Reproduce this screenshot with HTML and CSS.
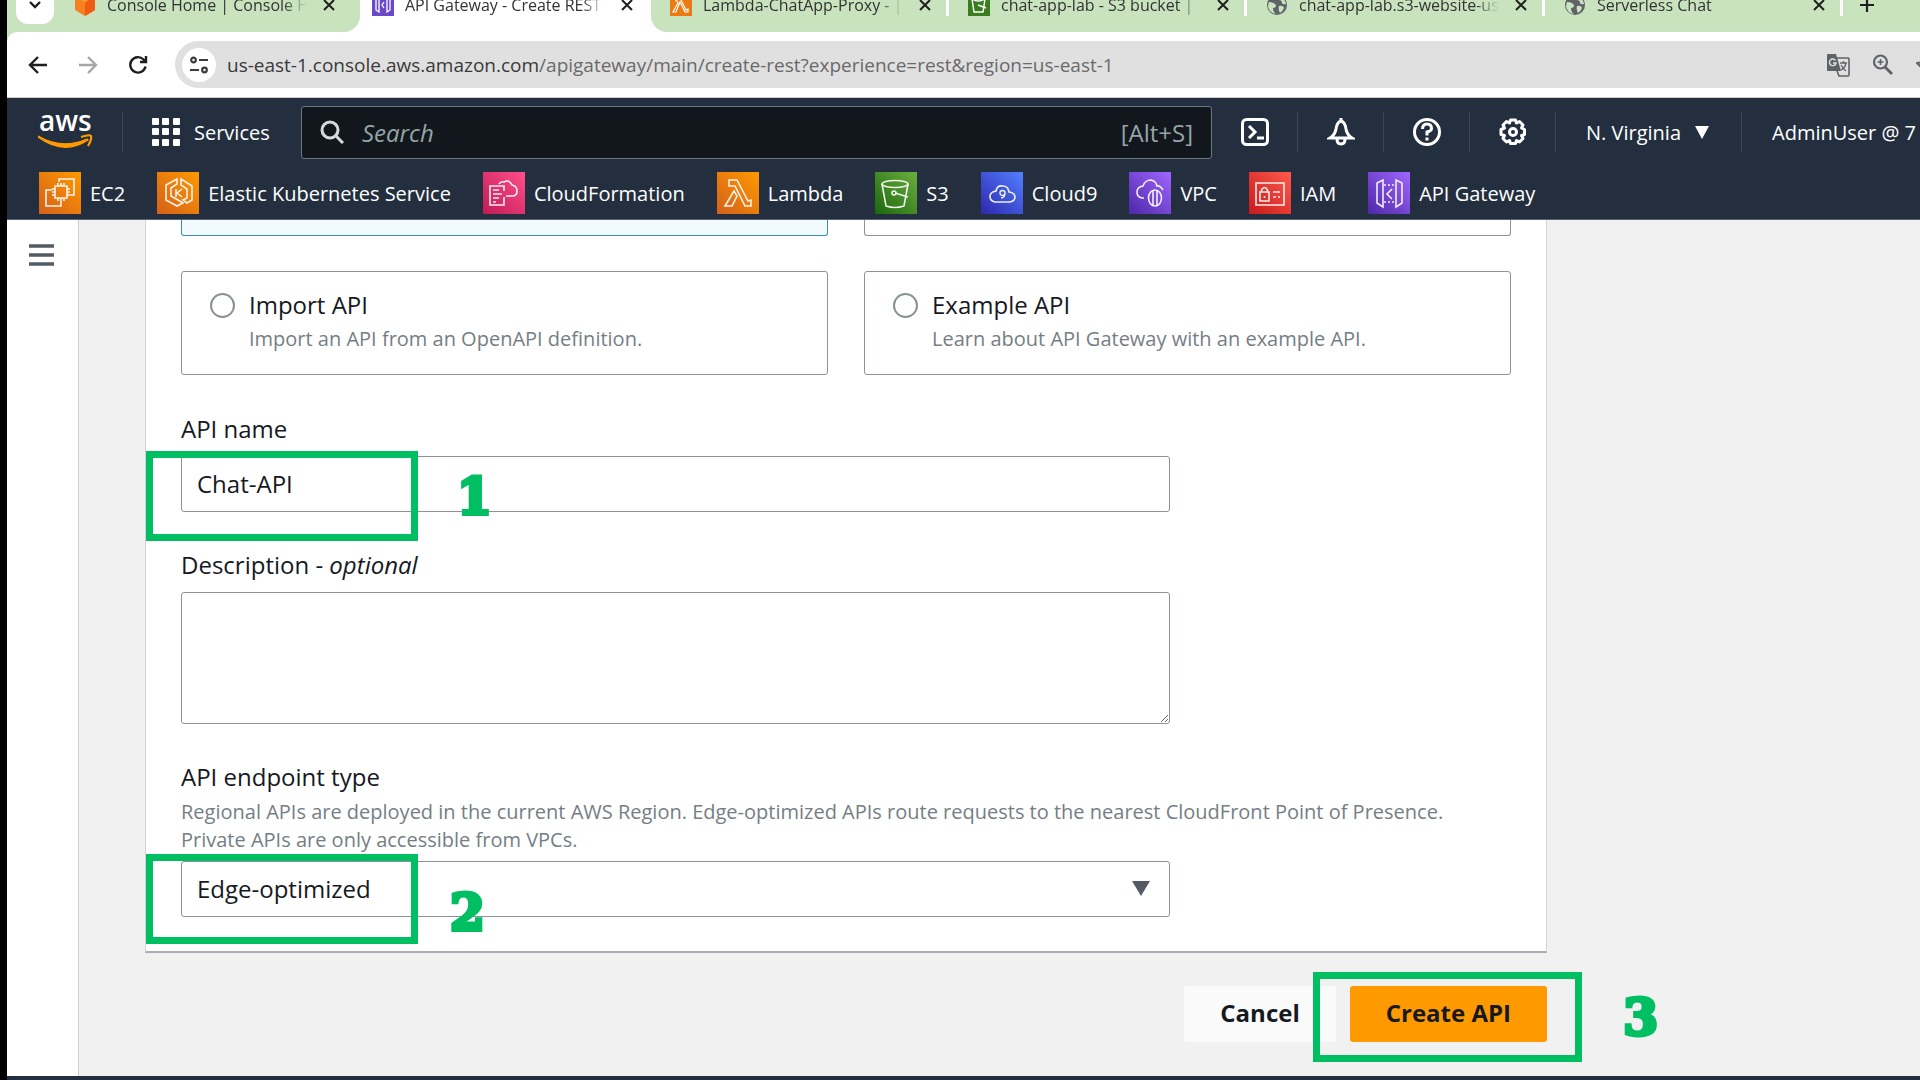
FILE: index.html
```html
<!DOCTYPE html>
<html lang="en">
<head>
<meta charset="utf-8">
<title>API Gateway - Create REST API</title>
<link rel="stylesheet" href="styles.css">
</head>
<body>
<div class="browser">
  <div class="tabstrip">
    <div class="tab-group tab-group-first">
      <button class="tab-search" aria-label="Search tabs"><svg width="16" height="16" viewBox="0 0 16 16"><path d="M3 5l5 5 5-5" fill="none" stroke="#1f1f1f" stroke-width="2.4"/></svg></button>
      <div class="tab">
        <svg class="favicon" viewBox="0 0 22 22"><path d="M1 3 11-2 21 3v13l-10 6-10-6z" fill="#f58220"/><path d="M11 8 21 3v13l-10 6z" fill="#f15a12"/><path d="M1 3l10 5 10-5-10-5z" fill="#ff9a2e"/></svg>
        <span class="tab-title">Console Home | Console H</span>
        <button class="tab-close" aria-label="Close tab"><svg viewBox="0 0 14 14"><path d="M2 2l10 10M12 2 2 12"/></svg></button>
      </div>
    </div>
    <div class="tab tab-active">
      <svg class="favicon" viewBox="0 0 22 22"><path d="M0 0h22v22H0z" fill="#6b48c8"/><path d="M7 4 4 6v10l3 2zM15 4l3 2v10l-3 2zM12 8l-2 3 2 3" fill="none" stroke="#fff" stroke-width="1.3"/></svg>
      <span class="tab-title">API Gateway - Create REST</span>
      <button class="tab-close" aria-label="Close tab"><svg viewBox="0 0 14 14"><path d="M2 2l10 10M12 2 2 12"/></svg></button>
    </div>
    <div class="tab-group tab-group-last">
      <div class="tab">
        <svg class="favicon" viewBox="0 0 22 22"><path d="M0 0h22v22H0z" fill="#ed7a10"/><path d="M6 4h4l6 12 2-1v3h-3L10 8l-4 10H3l5-9-1-2H6z" fill="none" stroke="#fff" stroke-width="1.2"/></svg>
        <span class="tab-title">Lambda-ChatApp-Proxy - |</span>
        <button class="tab-close" aria-label="Close tab"><svg viewBox="0 0 14 14"><path d="M2 2l10 10M12 2 2 12"/></svg></button>
      </div>
      <div class="tab">
        <svg class="favicon" viewBox="0 0 22 22"><path d="M0 0h22v22H0z" fill="#3a7d1e"/><path d="M4 5h13l-2 13H6zM4 5q6 4 13 0M10 11l8 3" fill="none" stroke="#fff" stroke-width="1.4"/></svg>
        <span class="tab-title">chat-app-lab - S3 bucket |</span>
        <button class="tab-close" aria-label="Close tab"><svg viewBox="0 0 14 14"><path d="M2 2l10 10M12 2 2 12"/></svg></button>
      </div>
      <div class="tab">
        <svg class="favicon" viewBox="0 0 22 22"><circle cx="11" cy="11" r="10" fill="#5f6368"/><path d="M3 8q5 0 7 3 0 3-3 3 0 4 3 6-7-1-8-8zM12 2q-2 3 1 4 3 0 3 3 1 2 4 1-1-6-8-8zM13 12q4-1 5 2-1 3-4 5-2-3-1-7z" fill="#c9e3be"/></svg>
        <span class="tab-title">chat-app-lab.s3-website-us</span>
        <button class="tab-close" aria-label="Close tab"><svg viewBox="0 0 14 14"><path d="M2 2l10 10M12 2 2 12"/></svg></button>
      </div>
      <div class="tab">
        <svg class="favicon" viewBox="0 0 22 22"><circle cx="11" cy="11" r="10" fill="#5f6368"/><path d="M3 8q5 0 7 3 0 3-3 3 0 4 3 6-7-1-8-8zM12 2q-2 3 1 4 3 0 3 3 1 2 4 1-1-6-8-8zM13 12q4-1 5 2-1 3-4 5-2-3-1-7z" fill="#c9e3be"/></svg>
        <span class="tab-title">Serverless Chat</span>
        <button class="tab-close" aria-label="Close tab"><svg viewBox="0 0 14 14"><path d="M2 2l10 10M12 2 2 12"/></svg></button>
      </div>
      <button class="tab-new" aria-label="New tab"><svg width="18" height="18" viewBox="0 0 18 18"><path d="M9 2v14M2 9h14" stroke="#1f1f1f" stroke-width="2.2"/></svg></button>
    </div>
  </div>

  <div class="toolbar-wrap">
    <div class="toolbar">
      <button class="nav-button" aria-label="Back"><svg viewBox="0 0 20 20"><path d="M19 10H3M10 2l-8 8 8 8" stroke="#1f1f1f"/></svg></button>
      <button class="nav-button" aria-label="Forward"><svg viewBox="0 0 20 20"><path d="M1 10h16M10 2l8 8-8 8" stroke="#a6a6a6"/></svg></button>
      <button class="nav-button" aria-label="Reload"><svg viewBox="0 0 20 20"><path d="M17.500 11.500A7.700 7.700 0 1 1 15.500 4.500L18 7M18 1v6h-6" stroke="#1f1f1f"/></svg></button>
      <div class="omnibox">
        <button class="site-info" aria-label="View site information"><svg width="20" height="20" viewBox="0 0 20 20" fill="none" stroke="#3c3c3c" stroke-width="2.200"><circle cx="4.500" cy="5" r="2.300"/><path d="M10 5h9M1 15h9"/><circle cx="15.500" cy="15" r="2.300"/></svg></button>
        <div class="url"><span class="url-host">us-east-1.console.aws.amazon.com</span>/apigateway/main/create-rest?experience=rest&amp;region=us-east-1</div>
        <button class="omni-action" aria-label="Translate this page"><svg width="24" height="24" viewBox="0 0 24 24"><path d="M2 1h8l5 17H2q-1 0-1-1V2q0-1 1-1z" fill="#5f6368"/><path d="M11 5h11q1 0 1 1v16q0 1-1 1h-9l-2-5" fill="none" stroke="#5f6368" stroke-width="1.600"/><path d="M14 10h7M17.500 8v2M20 10q-1 5-5 7M15 12q2 4 5 6" fill="none" stroke="#5f6368" stroke-width="1.300"/><path d="M9.500 7.500A3.300 3.300 0 1 0 10 10H7" fill="none" stroke="#e0e0e0" stroke-width="1.400"/></svg></button>
        <button class="omni-action" aria-label="Zoom"><svg width="22" height="22" viewBox="0 0 22 22" fill="none" stroke="#5f6368" stroke-width="2.200"><circle cx="8.500" cy="8" r="6.500"/><path d="M13 13l7 7" stroke-width="2.800"/><path d="M5.500 8h6M8.500 5v6" stroke-width="1.600"/></svg></button>
        <button class="omni-action omni-star" aria-label="Bookmark this tab"><svg width="22" height="22" viewBox="0 0 22 22"><path d="M11 1l3 7 7 1-5 5 1 7-6-4-6 4 1-7-5-5 7-1z" fill="none" stroke="#5f6368" stroke-width="2"/></svg></button>
      </div>
    </div>
  </div>

  <header class="aws-header">
    <div class="aws-nav">
      <a class="aws-logo" href="#" aria-label="AWS"><svg width="56" height="40" viewBox="0 0 56 40"><text x="1" y="19" class="aws-word">aws</text><path d="M0 24q24 14 49 3l1 1q-24 16-50-3z" fill="#f90" stroke="#f90" stroke-width="1.200"/><path d="M43 25q9-3 10-1 1 3-3 10" fill="none" stroke="#f90" stroke-width="2.200"/></svg></a>
      <button class="services"><svg width="28" height="28" viewBox="0 0 28 28" fill="#fff"><rect width="7" height="7" rx="1"/><rect x="10" width="7" height="7" rx="1"/><rect x="21" width="7" height="7" rx="1"/><rect y="10" width="7" height="7" rx="1"/><rect x="10" y="10" width="7" height="7" rx="1"/><rect x="21" y="10" width="7" height="7" rx="1"/><rect y="21" width="7" height="7" rx="1"/><rect x="10" y="21" width="7" height="7" rx="1"/><rect x="21" y="21" width="7" height="7" rx="1"/></svg><span>Services</span></button>
      <label class="search">
        <svg width="24" height="24" viewBox="0 0 24 24" fill="none" stroke="#d5dbdb" stroke-width="3"><circle cx="10" cy="10" r="8"/><path d="M15.500 15.500l7.500 7.500"/></svg>
        <input class="search-input" type="search" placeholder="Search" aria-label="Search">
        <span class="search-key">[Alt+S]</span>
      </label>
      <button class="nav-icon" aria-label="CloudShell"><svg viewBox="0 0 28 28"><rect x="1.500" y="1.500" width="25" height="25" rx="4"/><path d="M8 8l6 6-6 6M16 20h7"/></svg></button>
      <button class="nav-icon" aria-label="Notifications"><svg viewBox="0 0 28 28"><path d="M14 3q-4 1-5 8-1 6-6 9h22q-5-3-6-9-1-7-5-8zM14 0v4M10 21q0 5 4 5t4-5"/></svg></button>
      <button class="nav-icon" aria-label="Help"><svg viewBox="0 0 28 28"><circle cx="14" cy="14" r="12.500"/><path d="M9.500 11q0-5 4.500-5t4.500 4.500Q18.500 13 14 14v3.500M14 19.500v3"/></svg></button>
      <button class="nav-icon" aria-label="Settings"><svg viewBox="0 0 28 28"><path d="M11.500 2h5l1 3 3-1.500 3.500 3.500-1.500 3 3 1.500v5l-3 1 1.500 3-3.500 3.500-3-1.500-1 3h-5l-1-3-3 1.500L4 20.500l1.500-3-3.500-1v-5l3.500-1.500L4 7l3.500-3.500 3 1.500z" stroke-linejoin="round"/><circle cx="14" cy="14" r="3.500"/></svg></button>
      <button class="nav-menu region">N. Virginia <svg width="14" height="13" viewBox="0 0 14 13"><path d="M0 0h14L7 13z" fill="#fff"/></svg></button>
      <button class="nav-menu account">AdminUser @ 7</button>
    </div>
    <nav class="favorites">
      <a class="fav" href="#"><svg class="fav-icon orange" viewBox="0 0 42 42"><path d="M16 14h12v12H16zM19 14v-3M22 14v-3M25 14v-3M19 26v3M22 26v3M25 26v3M16 17h-3M16 20h-3M16 23h-3M28 17h3M28 20h3M28 23h3M20 10V7h15v16h-4M13 18H7v16h15v-5"/></svg>EC2</a>
      <a class="fav" href="#"><svg class="fav-icon orange" viewBox="0 0 42 42"><path d="M20 7 9 13v15l11 6 6-3-5-3-7-4V16l6-4zM24 7l11 7v14l-5 3-4-3 4-2v-9l-6-4zM19 17v8M25 17l-5 4 5 4"/></svg>Elastic Kubernetes Service</a>
      <a class="fav" href="#"><svg class="fav-icon pink" viewBox="0 0 42 42"><path d="M21 25v8H7V14h14v5M10 18h6M10 22h9M10 26h6M10 30h3M16 12q2-3 5-2 5-3 8 3 5 1 5 6t-5 5h-6"/></svg>CloudFormation</a>
      <a class="fav" href="#"><svg class="fav-icon orange" viewBox="0 0 42 42"><path d="M12 8h8l11 21 3-1v6h-6L18 14h-6zM17 19 8 34h7l5-10z"/></svg>Lambda</a>
      <a class="fav" href="#"><svg class="fav-icon green" viewBox="0 0 42 42"><ellipse cx="20" cy="12" rx="13" ry="3.500"/><path d="M7 12l4 22q9 3 18 0l4-22M20 21l13 4"/><circle cx="19" cy="21" r="2"/></svg>S3</a>
      <a class="fav" href="#"><svg class="fav-icon blue" viewBox="0 0 42 42"><path d="M14 30q-5-1-5-5.500t6-5.500q1-6 7-5 5 0 6 6 6 1 6 5t-5 5z"/><path d="M24 21a2.500 2.500 0 1 0-2.500 2.500q2.500 0 2.500-2.500 0 5-4 5" stroke-width="1.400"/></svg>Cloud9</a>
      <a class="fav" href="#"><svg class="fav-icon purple" viewBox="0 0 42 42"><path d="M15 26h-2q-5-1-5-6t6-6q2-6 8-6 5 1 6 6 3-1 6 4"/><ellipse cx="26" cy="26" rx="6.500" ry="8"/><path d="M24 18v16M28 18v16"/></svg>VPC</a>
      <a class="fav" href="#"><svg class="fav-icon red" viewBox="0 0 42 42"><path d="M7 11h28v22H7zM11 20h9v9h-9zM12.500 20v-2q3-5 6 0v2M15.500 24v2M24 20h7M24 25h3M29 25h2"/></svg>IAM</a>
      <a class="fav" href="#"><svg class="fav-icon purple" viewBox="0 0 42 42"><path d="M9 11l6-3v27l-6-4zM34 11l-6-3v27l6-4zM24 17l-5 5 5 5"/><path d="M16 13h11M16 30h11" stroke-dasharray="2 2"/></svg>API Gateway</a>
    </nav>
  </header>

  <div class="page">
    <aside class="side"><button class="side-toggle" aria-label="Open navigation"><svg width="25" height="23" viewBox="0 0 25 23"><path d="M0 2h25M0 11h25M0 20h25" stroke="#545b64" stroke-width="3.500"/></svg></button></aside>
    <main class="main">
      <form class="form">
        <div class="card">
          <div class="tiles">
            <div class="tile tile-cut tile-selected"></div>
            <div class="tile tile-cut"></div>
            <label class="tile"><input class="radio" type="radio" name="kind"><span class="label">Import API</span><span class="hint">Import an API from an OpenAPI definition.</span></label>
            <label class="tile"><input class="radio" type="radio" name="kind"><span class="label">Example API</span><span class="hint">Learn about API Gateway with an example API.</span></label>
          </div>
          <div class="field">
            <label class="label" for="api-name">API name</label>
            <div class="control"><input class="input" id="api-name" type="text" value="Chat-API"><div class="mark mark-name"></div><span class="step step-name">1</span></div>
          </div>
          <div class="field">
            <label class="label" for="description">Description - <i>optional</i></label>
            <div class="control"><textarea class="input textarea" id="description"></textarea></div>
          </div>
          <div class="field field-endpoint">
            <label class="label" for="endpoint">API endpoint type</label>
            <p class="hint">Regional APIs are deployed in the current AWS Region. Edge-optimized APIs route requests to the nearest CloudFront Point of Presence. Private APIs are only accessible from VPCs.</p>
            <div class="control"><select class="input select" id="endpoint"><option>Edge-optimized</option></select><svg class="caret" width="18" height="15" viewBox="0 0 18 15"><path d="M0 0h18L9 15z" fill="#545b64"/></svg><div class="mark mark-endpoint"></div><span class="step step-endpoint">2</span></div>
          </div>
        </div>
        <div class="actions">
          <button class="button" type="button">Cancel</button>
          <button class="button button-primary" type="button">Create API</button>
          <div class="mark mark-create"></div><span class="step step-create">3</span>
        </div>
      </form>
    </main>
  </div>
  <footer class="footer"></footer>
</div>
</body>
</html>
```
FILE: styles.css
```css
* { box-sizing: border-box; }

body {
  margin: 0;
  background: #000;
  color: #16191f;
  font-family: "Open Sans", "Noto Sans", sans-serif;
  font-size: 20px;
  overflow: hidden;
}

button {
  padding: 0;
  border: 0;
  background: none;
  color: inherit;
  font: inherit;
}

svg { display: block; flex: none; }

.browser {
  display: flex;
  flex-direction: column;
  min-height: 100vh;
  margin-left: 7px;
  overflow: hidden;
}

/* Browser tabs, the top half scrolled out of view */
.tabstrip {
  display: flex;
  height: 54px;
  margin-top: -22px;
  background: #fff;
}

.tab-group { display: flex; align-items: center; background: #c9e3be; }
.tab-group-first { border-bottom-right-radius: 16px; padding-left: 9px; gap: 8px; }
.tab-group-last { flex: 1; border-bottom-left-radius: 16px; min-width: 0; }

.tab-search {
  display: grid;
  place-items: center;
  width: 38px;
  height: 38px;
  border-radius: 12px;
  background: #fff;
}

.tab {
  display: flex;
  align-items: center;
  flex: none;
  width: 298px;
  height: 54px;
  padding-left: 12px;
  font-size: 16px;
}

.tab-active { width: 291px; background: #fff; }
.tab-group-last .tab { padding-left: 19px; }
.tab-group-last .tab::after {
  content: "";
  width: 3px;
  height: 22px;
  margin-left: auto;
  background: #fff;
}

.favicon { width: 22px; height: 22px; margin-right: 11px; }

.tab-title {
  width: 200px;
  overflow: hidden;
  white-space: nowrap;
  color: #333;
  mask-image: linear-gradient(90deg, #000 88%, transparent);
}

.tab-close { margin-left: 15px; }
.tab-close svg { width: 14px; height: 14px; stroke: #1f1f1f; stroke-width: 2; }
.tab-new { margin-left: 15px; }

.toolbar-wrap { background: #c9e3be; }

.toolbar {
  display: flex;
  align-items: center;
  height: 66px;
  padding-left: 21px;
  border-top-left-radius: 10px;
  background: #fff;
  border-bottom: 1px solid #ccc;
}

.nav-button { width: 20px; height: 20px; margin-right: 30px; }
.nav-button svg { width: 20px; height: 20px; fill: none; stroke-width: 2.4px; }

.omnibox {
  display: flex;
  align-items: center;
  flex: 1;
  height: 47px;
  margin-left: -3px;
  padding-left: 7px;
  border-radius: 24px 0 0 24px;
  background: #e0e0e0;
  overflow: hidden;
}

.site-info {
  display: grid;
  place-items: center;
  width: 34px;
  height: 34px;
  margin-right: 11px;
  border-radius: 50%;
  background: #fff;
}

.url { flex: 1; color: #6a6a6a; font-size: 19px; white-space: nowrap; }
.url-host { color: #3a3a3a; }
.omni-action { margin-right: 22px; }
.omni-star { margin-right: -18px; }

.aws-header { background: #232f3e; color: #fff; border-bottom: 1px solid #5a6470; }

.aws-nav {
  display: flex;
  align-items: center;
  height: 70px;
  padding: 0 0 2px 31px;
}

.aws-logo { padding-right: 28px; border-right: 1px solid #3a4655; }
.aws-word { fill: #fff; font-size: 28px; font-weight: 600; }

.services {
  display: flex;
  align-items: center;
  flex: none;
  gap: 14px;
  width: 178px;
  padding-left: 29px;
}

.search {
  display: flex;
  align-items: center;
  flex: 0 1 911px;
  height: 53px;
  padding: 0 18px;
  border: 1px solid #6b7680;
  border-radius: 3px;
  background: #12171e;
  color: #95a5a6;
  font-size: 24px;
}

.search-input {
  flex: 1;
  min-width: 0;
  margin-left: 18px;
  padding: 0;
  border: 0;
  outline: 0;
  background: none;
  color: #fff;
  font: inherit;
}

.search-input::placeholder { color: #95a5a6; font-style: italic; }

.nav-icon {
  display: grid;
  flex: none;
  place-items: center;
  width: 86px;
  height: 40px;
  border-right: 1px solid #3a4655;
}

.nav-icon svg { width: 28px; height: 28px; fill: none; stroke: #fff; stroke-width: 3px; }

.nav-menu {
  display: flex;
  align-items: center;
  flex: none;
  gap: 14px;
  height: 40px;
  padding-left: 30px;
  white-space: nowrap;
}

.region { padding-right: 32px; border-right: 1px solid #3a4655; }

.favorites { display: flex; gap: 32px; height: 51px; padding: 4px 32px 5px; }
.fav { display: flex; align-items: center; gap: 9px; color: #fff; text-decoration: none; white-space: nowrap; }
.fav-icon { width: 42px; height: 42px; fill: none; stroke: #fff; stroke-opacity: 0.9; stroke-width: 1.6px; }
.orange { background: linear-gradient(45deg, #d4601a, #f90); }
.pink { background: linear-gradient(45deg, #c01a55, #ff4f8b); }
.green { background: linear-gradient(45deg, #1b660f, #6cae3e); }
.blue { background: linear-gradient(45deg, #2e27ad, #527fff); }
.purple { background: linear-gradient(45deg, #4d27a8, #a166ff); }
.red { background: linear-gradient(45deg, #c71a1a, #ff5a4c); }

.page { display: flex; flex: 1; background: #f1f1f1; }

.side { width: 72px; padding: 24px 0 0 22px; border-right: 1px solid #d0d0d0; background: #fff; }

.main { flex: 1; padding: 0 32px 33px 66px; }
.form { max-width: 1402px; }

.card {
  padding: 0 35px 34px;
  border: 1px solid #d5d5d5;
  border-top: 0;
  border-bottom: 2px solid #a9adb5;
  background: #fff;
}

.tiles { display: grid; grid-template-columns: 1fr 1fr; gap: 35px 36px; padding-bottom: 1px; }

.tile {
  display: grid;
  grid-template-columns: 25px 1fr;
  column-gap: 14px;
  row-gap: 4px;
  padding: 17px 28px 21px;
  border: 1px solid #8d9496;
  border-radius: 3px;
}

.tile-cut { height: 16px; padding: 0; border-top: 0; border-radius: 0 0 3px 3px; }
.tile-selected { border-color: #3c8dbc; background: #f1faff; }

.radio {
  appearance: none;
  align-self: center;
  width: 25px;
  height: 25px;
  margin: 0;
  border: 2px solid #879196;
  border-radius: 50%;
}

.tile .hint { grid-column: 2; }

.label { display: block; font-size: 24px; line-height: 32px; }
.hint { max-width: 1310px; margin: 0; color: #757e84; line-height: 28px; }

.field { margin-top: 37px; }
.control { position: relative; max-width: 989px; margin-top: 11px; }
.field-endpoint .hint { margin-top: 5px; }
.field-endpoint .control { margin-top: 7px; }

.input {
  display: block;
  width: 100%;
  height: 56px;
  padding: 0 15px 2px;
  border: 1px solid #8d9496;
  border-radius: 3px;
  outline: 0;
  background: #fff;
  color: #16191f;
  font: inherit;
  font-size: 24px;
}

.textarea { height: 132px; }
.select { appearance: none; }
.caret { position: absolute; top: 20px; right: 20px; }

.actions { position: relative; display: flex; justify-content: flex-end; gap: 14px; margin-top: 33px; }

.button {
  height: 56px;
  padding: 0 36px 4px;
  border-radius: 3px;
  background: #fafafa;
  font-size: 24px;
  font-weight: 700;
}

.button-primary { background: #f90; }

/* Tutorial call-outs drawn over the form */
.mark { position: absolute; width: 272px; height: 90px; border: 7px solid #00bf63; }
.mark-name { left: -35px; top: -5px; }
.mark-endpoint { left: -35px; top: -7px; }
.mark-create { right: -35px; top: -14px; width: 269px; }

.step {
  position: absolute;
  color: #00bf63;
  font: bold 50px/52px "DejaVu Serif", serif;
  -webkit-text-stroke: 4px #00bf63;
}

.step-name { left: 276px; top: 15px; }
.step-endpoint { left: 269px; top: 26px; }
.step-create { right: -111px; top: 6px; }

.footer { height: 4px; background: #232f3e; }
```
